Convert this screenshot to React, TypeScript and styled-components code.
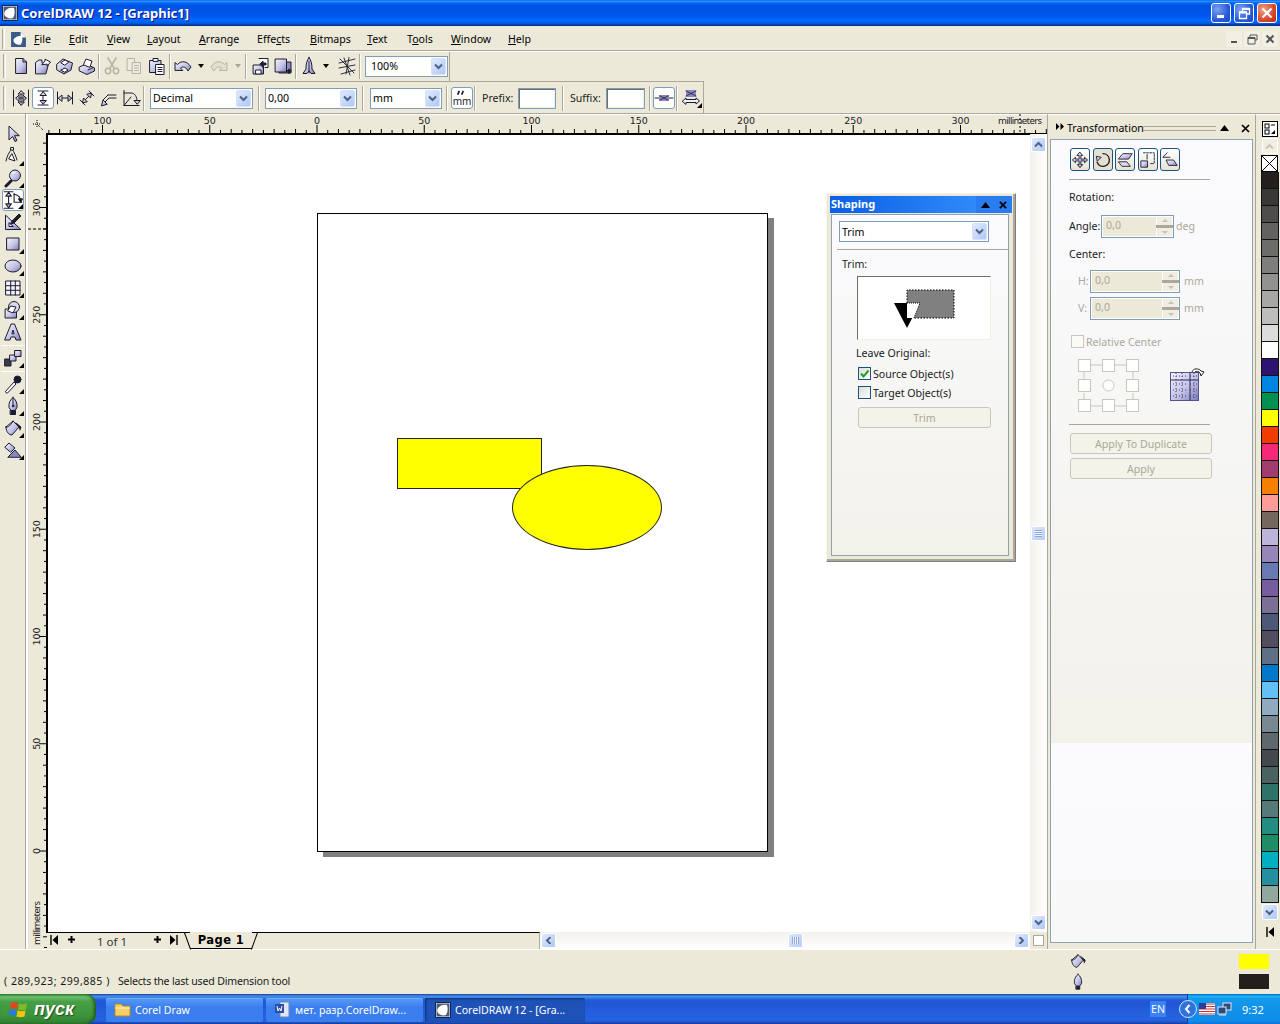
import React from 'react';
import styled, { createGlobalStyle } from 'styled-components';

const UI = '"Noto Sans", "DejaVu Sans", sans-serif';
const BEIGE = '#ece9d8';
const FS = '10.6px';

const Global = createGlobalStyle`
  html, body { margin: 0; padding: 0; width: 1280px; height: 1024px; overflow: hidden; background: ${BEIGE}; }
  body { font-family: ${UI}; font-size: ${FS}; color: #000; }
  * { box-sizing: border-box; }
`;

const Root = styled.div`width:1280px;height:1024px;display:flex;flex-direction:column;background:${BEIGE};`;
const Defs = styled.svg`display:block;width:0;height:0;`;

/* ---------- title ---------- */
const TitleBar = styled.header`
  height:26px;display:flex;align-items:center;padding:0 3px 0 2px;flex:none;
  background:linear-gradient(180deg,#0058ee 0%,#3593ff 4%,#288eff 6%,#127dff 8%,#036ffc 10%,#0262ee 14%,#0057e5 20%,#0054e3 24%,#0055eb 56%,#005bf5 66%,#026afe 76%,#0062ef 86%,#0052d6 92%,#0040ab 94%,#003092 100%);
`;
const TitleText = styled.div`
  margin-left:3px;flex:1;color:#fff;font:bold 13px "Noto Sans",sans-serif;text-shadow:1px 1px 0 #0f1089;white-space:nowrap;
`;
const WinBtn = styled.button<{ $close?: boolean }>`
  width:20px;height:20px;margin-left:3px;padding:0;border:1px solid #fff;border-radius:3px;display:flex;align-items:center;justify-content:center;
  background:${p => p.$close ? 'radial-gradient(circle at 30% 30%,#f0a088,#d8492a 60%,#b32c10)' : 'radial-gradient(circle at 30% 30%,#7aa2f5,#2a5cd8 60%,#1c44b8)'};
`;

/* ---------- menu ---------- */
const MenuBar = styled.nav`
  height:25px;flex:none;display:flex;align-items:center;padding:2px 0 0 6px;border-bottom:1px solid #aca899;box-shadow:0 1px 0 #fff;position:relative;
`;
const MenuGrip = styled.span`width:3px;height:20px;border-left:1px solid #aca899;border-right:1px solid #fff;margin-left:-4px;margin-right:5px;`;
const DocIcon = styled.svg`display:block;width:17px;height:17px;flex:none;margin-right:7px;`;
const MenuItem = styled.span<{ $w: number }>`width:${p => p.$w}px;flex:none;font-size:${FS};`;
const MdiGroup = styled.div`margin-left:auto;display:flex;gap:2px;padding-right:2px;`;
const MdiBtn = styled.span`width:16px;height:16px;background:#f2f0e4;display:flex;align-items:center;justify-content:center;`;

/* ---------- toolbars ---------- */
const ToolRow1 = styled.div`height:30px;flex:none;display:flex;align-items:center;padding-left:3px;width:450px;border-right:1px solid #aca899;`;
const Tool2Wrap = styled.div`height:33px;flex:none;border-bottom:1px solid #aca899;box-shadow:0 1px 0 #fff;`;
const ToolRow2 = styled.div`height:32px;width:704px;display:flex;align-items:center;padding:1px 0 0 3px;border-top:1px solid #aca899;border-right:1px solid #aca899;`;
const Grip = styled.span`width:3px;height:24px;border-left:1px solid #aca899;border-right:1px solid #fff;margin-right:4px;flex:none;`;
const Sep = styled.span<{ $l?: number; $r?: number }>`
  width:2px;height:25px;flex:none;border-left:1px solid #aca899;border-right:1px solid #fff;margin:0 ${p => p.$r ?? 1}px 0 ${p => p.$l ?? 1}px;
`;
const TB = styled.span<{ $on?: boolean; $ml?: number }>`
  position:relative;width:22px;height:22px;flex:none;display:flex;align-items:center;justify-content:center;margin-left:${p => p.$ml ?? 0}px;
  ${p => p.$on ? 'background:#fff;border:1px solid #7f9db9;border-radius:3px;' : ''}
`;
const DropTri = styled.span<{ $off?: boolean; $ml?: number }>`
  width:0;height:0;flex:none;margin:0 2px 0 ${p => p.$ml ?? 3}px;border:3px solid transparent;border-top:4px solid ${p => p.$off ? '#aca899' : '#000'};border-bottom:0;
`;
const Combo = styled.div<{ $w: number; $ml?: number; $pl?: number }>`
  width:${p => p.$w}px;height:21px;flex:none;margin-left:${p => p.$ml ?? 0}px;background:#fff;border:1px solid #7f9db9;display:flex;align-items:center;justify-content:space-between;padding:0 1px 0 ${p => p.$pl ?? 2}px;font-size:${FS};
`;
const ArrowBtn = styled.span`
  width:15px;height:17px;flex:none;background:linear-gradient(135deg,#e1eafe,#aec8f7);border:1px solid #d5e1fb;border-radius:2px;display:flex;align-items:center;justify-content:center;
`;
const Label = styled.span<{ $ml?: number; $w: number }>`font-size:${FS};margin-left:${p => p.$ml ?? 0}px;width:${p => p.$w}px;flex:none;color:#1c1c1c;`;
const TextBox = styled.span<{ $w: number; $ml?: number }>`
  width:${p => p.$w}px;height:21px;flex:none;margin-left:${p => p.$ml ?? 0}px;background:#fff;border:1px solid #7f9db9;box-shadow:inset 1px 1px 0 #716f64,inset -1px -1px 0 #f1efe2;
`;

/* ---------- main ---------- */
const Main = styled.main`flex:1;min-height:0;display:flex;`;
const Toolbox = styled.aside`
  width:28px;flex:none;display:flex;flex-direction:column;align-items:center;padding:9px 0 0 0;border-right:2px solid #fff;box-shadow:inset -1px 0 0 #aca899;
`;
const ToolboxRule = styled.span`width:24px;height:2px;border-bottom:1px solid #fff;margin:1px 0;flex:none;`;
const Center = styled.section`width:1019px;flex:none;display:grid;grid-template-columns:19px 983px 17px;grid-template-rows:19px 799px 17px;`;
const Corner = styled.div`display:flex;align-items:center;justify-content:center;padding:3px 0 0 1px;`;
const RulerH = styled.svg`display:block;grid-column:2 / 4;width:1000px;height:19px;`;
const RulerV = styled.svg`display:block;width:19px;height:816px;grid-row:2 / 4;`;
const Drawing = styled.div`position:relative;background:#fff;border-top:2px solid #000;border-left:2px solid #000;margin-left:-1px;overflow:hidden;`;
const PageSheet = styled.div`position:absolute;left:269px;top:78px;width:451px;height:639px;background:#fff;border:1px solid #000;box-shadow:6px 5px 0 #808080;`;
const ShapeRect = styled.div`position:absolute;left:79px;top:224px;width:145px;height:51px;background:#ff0;border:1px solid #222;`;
const ShapeEllipse = styled.div`position:absolute;left:194px;top:251px;width:150px;height:85px;background:#ff0;border:1px solid #222;border-radius:50%;`;

const VScroll = styled.div`display:flex;flex-direction:column;justify-content:space-between;align-items:center;padding:3px 0 2px;background:linear-gradient(90deg,#f3f1ec,#fff);border-top:1px solid #000;`;
const ScrollBtn = styled.span`
  width:15px;height:15px;flex:none;background:linear-gradient(135deg,#e1eafe,#aec8f7);border:1px solid #fff;border-radius:2px;display:flex;align-items:center;justify-content:center;
`;
const Thumb = styled.span<{ $v?: boolean; $ml?: number }>`
  width:15px;height:15px;flex:none;margin-left:${p => p.$ml ?? 0}px;background:linear-gradient(135deg,#dbe6fd,#b8cff8);border:1px solid #fff;border-radius:2px;display:flex;align-items:center;justify-content:center;
  &::after{content:'';width:7px;height:7px;background:repeating-linear-gradient(${p => p.$v ? '180deg' : '90deg'},#8fa8d8 0 1px,#eef3ff 1px 2px);}
`;
const HBar = styled.div`display:flex;min-width:0;grid-column:2;margin-left:-1px;`;
const Tabs = styled.div`width:494px;flex:none;display:flex;align-items:center;border-top:1px solid #000;padding:0 0 3px 4px;border-right:1px solid #aca899;`;
const NavIcon = styled.span<{ $ml: number }>`margin-left:${p => p.$ml}px;flex:none;display:flex;`;
const PageCount = styled.span`font-size:11.5px;color:#333;margin-left:21px;width:56px;flex:none;padding-top:3px;`;
const PageTab = styled.span`
  position:relative;margin-left:12px;width:62px;height:17px;margin-top:-1px;align-self:flex-start;background:${BEIGE};display:flex;align-items:center;justify-content:center;
  border-bottom:1px solid #000;font:bold 11.5px "DejaVu Sans",sans-serif;letter-spacing:.4px;flex:none;
  &::before,&::after{content:'';position:absolute;top:0;width:1px;height:18px;background:#000;}
  &::before{left:-3px;transform:rotate(-20deg);}
  &::after{right:-3px;transform:rotate(20deg);}
`;
const HTrack = styled.div`flex:1;min-width:0;display:flex;justify-content:space-between;align-items:center;padding:0 1px;background:linear-gradient(180deg,#f3f1ec,#fff);`;
const ScrollCorner = styled.div`display:flex;align-items:center;justify-content:center;`;
const CornerBox = styled.span`width:11px;height:11px;background:#fff;border:1px solid #aca899;`;

/* ---------- shaping window ---------- */
const Floating = styled.div`position:absolute;left:778px;top:58px;width:190px;height:369px;background:${BEIGE};border:1px solid;border-color:#f7f5ea #808080 #808080 #f7f5ea;padding:2px 3px 5px;box-shadow:inset -2px -2px 0 #aca899;display:flex;flex-direction:column;`;
const FloatTitle = styled.div`
  height:17px;flex:none;display:flex;align-items:center;padding:0 0 0 1px;color:#fff;font:bold 11px "Noto Sans",sans-serif;
  background:linear-gradient(90deg,#0a5fe4,#3a94ff);
`;
const FloatTitleText = styled.span`flex:1;padding-bottom:2px;`;
const FloatBtn = styled.span`width:18px;height:17px;background:#2a7df0;display:flex;align-items:center;justify-content:center;`;
const FloatBody = styled.div`flex:1;margin-top:1px;margin-right:3px;margin-left:1px;border:1px solid #8ea4b4;background:linear-gradient(180deg,#fbfbff,#f2f1ea);padding:6px 0 0 7px;display:flex;flex-direction:column;`;
const Rule = styled.div<{ $w: number; $mt?: number; $ml?: number }>`width:${p => p.$w}px;height:1px;background:#aca899;flex:none;margin-top:${p => p.$mt ?? 0}px;margin-left:${p => p.$ml ?? 0}px;`;
const Txt = styled.div<{ $mt?: number; $ml?: number; $off?: boolean; $w?: number }>`font-size:${FS};line-height:13px;margin-top:${p => p.$mt ?? 0}px;margin-left:${p => p.$ml ?? 0}px;color:${p => p.$off ? '#aca899' : '#1a1a1a'};white-space:nowrap;${p => p.$w ? `width:${p.$w}px;flex:none;` : ''}`;
const Preview = styled.div`width:134px;height:64px;margin:5px 0 0 18px;background:#fff;border:1px solid;border-color:#716f64 #f1efe2 #f1efe2 #716f64;flex:none;`;
const PreviewArt = styled.svg`display:block;width:132px;height:62px;`;
const CheckRow = styled.div<{ $mt?: number; $ml: number; $off?: boolean }>`display:flex;align-items:center;gap:2px;margin-top:${p => p.$mt ?? 0}px;margin-left:${p => p.$ml}px;height:13px;font-size:${FS};color:${p => p.$off ? '#aca899' : '#1a1a1a'};white-space:nowrap;`;
const Check = styled.span<{ $off?: boolean }>`width:13px;height:13px;flex:none;border:1px solid ${p => p.$off ? '#c9c7ba' : '#1c5180'};background:${p => p.$off ? '#fbfbf6' : 'linear-gradient(135deg,#dcdcd7,#fff)'};display:flex;align-items:center;justify-content:center;`;
const OffBtn = styled.div<{ $w: number; $h?: number; $mt: number; $ml: number }>`
  width:${p => p.$w}px;height:${p => p.$h ?? 21}px;flex:none;margin-top:${p => p.$mt}px;margin-left:${p => p.$ml}px;background:#f4f3ea;border:1px solid #c9c7ba;border-radius:3px;color:#a9a797;font-size:${FS};display:flex;align-items:center;justify-content:center;
`;

/* ---------- docker ---------- */
const Docker = styled.aside`width:209px;flex:none;display:flex;flex-direction:column;border-top:1px solid #fff;border-left:1px solid #aca899;padding:0 2px 6px 2px;border-right:1px solid #aca899;`;
const DockHead = styled.div`height:24px;flex:none;display:flex;align-items:center;padding:2px 0 0 6px;`;
const DockArrows = styled.svg`display:block;width:8px;height:7px;flex:none;margin-top:-4px;`;
const DockTitle = styled.span`font-size:${FS};margin-left:3px;width:76px;flex:none;`;
const DockLines = styled.span`width:73px;height:5px;flex:none;border-top:1px solid #aca899;border-bottom:1px solid #aca899;`;
const DockHeadBtn = styled.span<{ $ml: number }>`margin-left:${p => p.$ml}px;display:flex;flex:none;`;
const DockBody = styled.div`
  flex:1;min-height:0;border:1px solid #8ea4b4;padding:8px 0 0 19px;display:flex;flex-direction:column;
  background:linear-gradient(180deg,#fbfbff,#f2f1ea) 0 0/100% 603px repeat-y;
`;
const ModeRow = styled.div`display:flex;gap:2.5px;flex:none;`;
const ModeBtn = styled.span<{ $on?: boolean }>`
  width:20px;height:23px;border:1px solid #1c5180;border-radius:3px;display:flex;align-items:center;justify-content:center;
  background:${p => p.$on ? '#e4e1cf' : 'linear-gradient(180deg,#fff,#e6e3d3)'};
`;
const SpinRow = styled.div<{ $mt: number; $ml?: number }>`display:flex;align-items:center;margin-top:${p => p.$mt}px;margin-left:${p => p.$ml ?? 0}px;flex:none;`;
const Spin = styled.div<{ $w: number }>`
  position:relative;width:${p => p.$w}px;height:23px;flex:none;border:1px solid #7f9db9;background:#fff;padding:1px;display:flex;
  &::after{content:'';position:absolute;right:0;top:9px;width:17px;height:3px;background:#aca899;}
`;
const SpinField = styled.span`flex:1;background:${BEIGE};color:#aca899;font-size:${FS};padding:0 0 4px 3px;display:flex;align-items:center;`;
const SpinArrows = styled.span`width:15px;margin-left:1px;flex:none;background:#f0eee2;display:flex;flex-direction:column;justify-content:space-between;align-items:center;padding:2px 0;`;
const TinyUp = styled.span<{ $down?: boolean }>`width:0;height:0;border:3px solid transparent;${p => p.$down ? 'border-top:3px solid #c4c2b3;border-bottom:0;' : 'border-bottom:3px solid #c4c2b3;border-top:0;'}`;
const AnchorRow = styled.div`display:flex;align-items:flex-start;margin:11px 0 0 8px;flex:none;`;
const Grid9 = styled.svg`display:block;width:62px;height:54px;flex:none;`;
const TableIcon = styled.svg`display:block;width:36px;height:36px;margin:8px 0 0 30px;flex:none;`;

/* ---------- palette ---------- */
const Palette = styled.aside`width:24px;flex:none;display:flex;flex-direction:column;align-items:center;padding:7px 0 0 3px;`;
const PalIcon = styled.span`width:16px;height:16px;flex:none;display:flex;`;
const PalBtn = styled.span<{ $off?: boolean }>`
  width:16px;height:16px;flex:none;margin-top:1px;display:flex;align-items:center;justify-content:center;background:${p => p.$off ? '#f1efe4' : 'linear-gradient(135deg,#e1eafe,#aec8f7)'};border:1px solid #fff;border-radius:2px;
`;
const NoFill = styled.span`width:17px;height:17px;flex:none;margin-top:1px;background:#fff;border:1px solid #000;display:flex;`;
const Swatches = styled.div`display:flex;flex-direction:column;width:18px;flex:none;border:solid #111;border-width:0 1px;`;
const Swatch = styled.span<{ $c: string }>`display:block;height:17px;background:${p => p.$c};border-bottom:1px solid #111;`;
const PalEnd = styled.span`margin-top:7px;flex:none;display:flex;`;

/* ---------- status ---------- */
const Status = styled.footer`height:45px;flex:none;display:flex;border-top:1px solid #fff;padding:0 11px 0 4px;`;
const StatusLeft = styled.div`flex:1;display:flex;align-items:flex-end;padding-bottom:6px;font-size:${FS};color:#1a1a1a;`;
const Coord = styled.span`width:114px;flex:none;letter-spacing:.5px;`;
const Hint = styled.span`letter-spacing:-.2px;`;
const StatusIcons = styled.div`width:170px;flex:none;display:flex;flex-direction:column;gap:3px;padding-top:2px;`;
const StatusSw = styled.div`width:30px;flex:none;display:flex;flex-direction:column;gap:5px;padding-top:4px;`;
const Chip = styled.span<{ $c: string }>`height:15px;background:${p => p.$c};display:block;`;

/* ---------- taskbar ---------- */
const Taskbar = styled.footer`
  height:30px;flex:none;display:flex;align-items:stretch;color:#fff;
  background:linear-gradient(180deg,#1f2f86 0,#3165c4 3%,#3682e5 6%,#4490e6 10%,#3883e5 12%,#2b71e0 15%,#2663da 18%,#235bd6 20%,#2258d5 23%,#2157d6 38%,#245ddb 54%,#2562df 86%,#245fdc 89%,#2158d4 92%,#1d4ec0 95%,#1941a5 98%);
`;
const Start = styled.div`
  width:96px;flex:none;display:flex;align-items:center;padding-left:9px;gap:5px;border-radius:0 10px 10px 0;
  background:linear-gradient(180deg,#388e38 0,#6cc06c 10%,#47a047 25%,#3c943c 70%,#2f7f2f 100%);box-shadow:inset -2px 0 3px #1d5c1d;
  font:italic bold 18px "Liberation Sans",sans-serif;text-shadow:1px 1px 1px #1c4c1c;
`;
const TaskBtn = styled.div<{ $on?: boolean; $w: number; $ml: number; $pl?: number }>`
  width:${p => p.$w}px;flex:none;margin:4px 0 2px ${p => p.$ml}px;display:flex;align-items:center;padding:0 0 1px ${p => p.$pl ?? 8}px;gap:4px;border-radius:2px;font-size:${FS};white-space:nowrap;overflow:hidden;
  background:${p => p.$on ? '#1e52b7' : 'linear-gradient(180deg,#5a9cf8,#3a7ef0 40%,#3a7ef0)'};
  ${p => p.$on ? 'box-shadow:inset 1px 1px 2px #12306e;' : 'box-shadow:inset 0 1px 0 #6fa9fa;'}
`;
const EnBox = styled.span`margin:auto 0 auto auto;font-size:${FS};background:#3c81f3;width:16px;height:16px;display:flex;align-items:center;justify-content:center;flex:none;`;
const Tray = styled.div`
  width:93px;margin-left:21px;flex:none;display:flex;align-items:center;border-left:1px solid #0f3f9a;
  background:linear-gradient(180deg,#0c59b9 0,#139ee9 5%,#18b5f2 10%,#139beb 15%,#1290e8 50%,#0d8dea 90%,#0f6fd3 100%);font-size:11px;
`;
const TrayChev = styled.span`margin-left:-9px;flex:none;display:flex;`;
const FlagIc = styled.svg`display:block;width:16px;height:12px;margin-left:2px;flex:none;`;
const NetIc = styled.svg`display:block;width:15px;height:15px;margin-left:2px;flex:none;`;
const TrayClock = styled.span`margin-left:10px;flex:none;`;

/* ---------- drawings ---------- */
const D = '#1c1c30';
const F = 'url(#lav)';
const Off = '#b5b3a4';
const IcSvg = styled.svg`display:block;flex:none;`;
const Ic: React.FC<{ children: React.ReactNode; s?: number }> = ({ children, s = 20 }) => (
  <IcSvg width={s} height={s} viewBox="0 0 20 20" fill="none" stroke={D} strokeWidth={1} strokeLinejoin="round" strokeLinecap="round">{children}</IcSvg>
);
const Chevron: React.FC<{ dir?: 'd' | 'u' | 'l' | 'r'; c?: string }> = ({ dir = 'd', c = '#4d6185' }) => {
  const r = { d: 0, u: 180, l: 90, r: 270 }[dir];
  return <svg width="9" height="7" viewBox="0 0 9 7"><path d="M1 1.5 4.5 5 8 1.5" fill="none" stroke={c} strokeWidth="2" transform={`rotate(${r} 4.5 3.5)`} /></svg>;
};
const Flyout = styled.span`position:absolute;right:0;bottom:1px;width:0;height:0;border-left:5px solid transparent;border-bottom:5px solid #000;`;
const CdrIcon: React.FC<{ s: number }> = ({ s }) => (
  <svg width={s} height={s} viewBox="0 0 16 16"><rect x=".5" y=".5" width="15" height="15" fill="#fff" stroke="#10264e" /><rect x="1.5" y="1.5" width="13" height="13" fill="#4a5a78" /><path d="M3 6c2-3 6-4 9-3 1 3 1 7-1 10-3 1-6 0-8-2-1-2-1-3 0-5z" fill="#fff" /></svg>
);
const Bucket = <><path d="M3 9 10 3l6 6-7 8c-3 0-6-3-6-8z" fill={F} /><path d="M3 9c2 1 5-2 7-6" /><path d="M13 5l5 4-1 3" fill={D} /></>;

const icons = {
  newDoc: <Ic><path d="M5 2.5h7l3.5 3.5v11.5H5z" fill={F} /><path d="M12 2.5V6h3.5" /></Ic>,
  open: <Ic><path d="M2.5 17.5V6.5L6 4h3v3h6v3l-2 7.5z" fill={F} /><path d="M9 8.5 12 5V3.2L17.5 6l-3.3 4.2V8.5z" fill="#fff" /></Ic>,
  save: <Ic><path d="M2 8 8 3l9.5 4-1.5 7-7 4-7-4z" fill={F} /><path d="M6 6.5 10 4l4 2-4 3z" fill="#fff" /><path d="M6 14l4-2 3 2-3 2z" fill="#fff" /></Ic>,
  print: <Ic><path d="M2.5 11 9 8l8.5 4v3L10 18.5 2.5 15z" fill={F} /><path d="M6.5 8.5 9 3l6 2-2 6z" fill="#fff" /><path d="M11 14l5-2.4" /></Ic>,
  cut: <Ic><g stroke={Off} strokeWidth={1.5}><path d="M6 2l6 10M14 2 8 12" /><circle cx="6" cy="15" r="2.7" /><circle cx="14" cy="15" r="2.7" /></g></Ic>,
  copy: <Ic><g stroke={Off} fill="#eeecdf"><path d="M3.5 2.5h7v12h-7z" /><path d="M8.5 6.5h8v11h-8z" /><path d="M10.5 9.5h4M10.5 12h4M10.5 14.5h4" /></g></Ic>,
  paste: <Ic><path d="M3 4.5h11v12H3z" fill={F} /><path d="M6 5V2.5h5V5z" fill="#fff" /><path d="M9 8.5h8v10H9z" fill="#fff" /><path d="M11 11.5h4M11 13.5h4M11 15.5h4" /></Ic>,
  undo: <Ic><path d="M2 14V6.5l2.5 2C8 4.5 14 4.5 18 11l-3 4c-2-4-5-5-7.5-3l2 2.2z" fill={F} /></Ic>,
  redo: <Ic><g stroke={Off} fill="#e2e0d2"><path d="M18 14V6.5l-2.5 2C12 4.5 6 4.5 2 11l3 4c2-4 5-5 7.5-3l-2 2.2z" /></g></Ic>,
  imp: <Ic><path d="M2.5 9h10v9h-10z" fill={F} /><path d="M5 14h5v4H5z" fill="#fff" /><path d="M8 2.5h9v9h-3" fill="#fff" /><path d="M9 8l3-3v2h3v2h-3v2z" fill={D} /></Ic>,
  exp: <Ic><path d="M13.5 6 18 6v11H6v-1" fill="#8f8dc0" /><path d="M2.5 3h11v13h-11z" fill={F} /><path d="M16 13l-2 2h1v2h2v-2h1z" fill={D} /></Ic>,
  rocket: <Ic><path d="M10 1.5C7.5 4.5 7 9 7 13l-3 4.500h4L10 15l2 2.500h4L13 13c0-4-.5-8.500-3-11.500z" fill={F} /><path d="M10 5v12" /></Ic>,
  web: <Ic><path d="M2 7 18 3M2 12l16-3M7 2l6 17M12 1.500 9 18M3 3l14 14M18 14 4 18" strokeWidth={.9} /></Ic>,
  dimAuto: <Ic><path d="M2.500 2v16M17.500 2v16M5 10h10" /><path d="M5 10l3-3v6zM15 10l-3-3v6z" fill={F} /><path d="M10 3v14" /><path d="M10 3 7 6h6zM10 17l-3-3h6z" fill={F} /></Ic>,
  dimV: <Ic><path d="M5 3h10M5 17h10M10 4v12" /><path d="M10 4 7 7.500h6zM10 16l-3-3.500h6z" fill={F} /></Ic>,
  dimH: <Ic><path d="M2.500 4v12M17.500 4v12M4 10h12" /><path d="M3.500 10 7 7v6zM16.500 10 13 7v6z" fill={F} /></Ic>,
  dimS: <Ic><path d="M3 12l5 5M12 3l5 5M7 13l6-6" /><path d="M5.500 14.500l1-4.500 3.500 3.500zM14.500 5.500l-1 4.500L10 6.500z" fill={F} /></Ic>,
  callout: <Ic><path d="M3 17l7-7h7" /><path d="M2.500 17.500 4 12l4 4z" fill={F} /><path d="M9 7l-5 5" /><path d="M17 7H9" /></Ic>,
  angular: <Ic><path d="M3 2.500v15h15" /><path d="M3 5h7c4 0 6 4 6 8" /><path d="M16 16l-3-3.500h6z" fill={F} /><path d="M3 17.500 10 9" /></Ic>,
  mmUnit: <Ic><path d="M7 3.500 6 6M11 3.500 10 6" strokeWidth={1.800} /><text x="10" y="17" fontSize="10" fill="#1c1c30" stroke="none" textAnchor="middle" fontFamily="Noto Sans">mm</text></Ic>,
  xxLine: <Ic><path d="M1 10h18" /><rect x="5" y="7" width="10" height="6" fill="#8b88c4" stroke="none" /><path d="M6 8l8 4M14 8l-8 4" strokeWidth={.8} /></Ic>,
  xxArrow: <Ic><rect x="5" y="2" width="10" height="7" fill="#8b88c4" stroke="none" /><path d="M5 3l10 5M15 3 5 8" strokeWidth={.8} /><path d="M1.500 13 5 10v1.500h10V10l3.500 3L15 16v-1.500H5V16z" fill="#eeeeff" /></Ic>,
  pick: <Ic><path d="M6 2.500V16l3.500-3.500 2.500 5 2-1-2.500-4.800h4.500z" fill={F} /></Ic>,
  shape: <Ic><path d="M3 15c1-5 3-9 6-12 2 3 4 7 5 11" /><rect x="8" y="1.500" width="2.500" height="2.500" fill="#fff" /><path d="M9 8l3 7-6-2z" fill="#fff" /></Ic>,
  zoom: <Ic><path d="M3 18l5-5" strokeWidth={3} /><circle cx="12" cy="7.500" r="5.500" fill={F} /><path d="M9 6c1-1 2-1.500 3-1.500" stroke="#fff" /></Ic>,
  dimTool: <Ic s={22}><path d="M2 2.500h8M2 17.500h8M6 3v14" /><path d="M6 3 3.500 6.500h5zM6 17l-2.500-3.500h5z" fill={F} /><path d="M11 4v8h7" /><path d="M11 5c4 0 6 3 6 6" /><path d="M17 12l-2-3h3.500z" fill={D} /></Ic>,
  draft: <Ic><path d="M2.500 3.500v14h15z" fill={F} /><path d="M6 11v3.500h4z" fill="#fff" /><path d="M9 9l7-7 2 2-7 7-3 1z" fill={D} /></Ic>,
  rect: <Ic><path d="M4 4h12v12H4z" fill={F} /></Ic>,
  ellipse: <Ic><ellipse cx="10" cy="10" rx="8" ry="6" fill={F} /></Ic>,
  grid: <Ic><path d="M3 3h14v14H3zM3 7.700h14M3 12.300h14M7.700 3v14M12.300 3v14" fill="#f4f4ff" /></Ic>,
  basic: <Ic><path d="M2.500 9h11v9h-11z" fill={F} /><circle cx="11" cy="7" r="5.500" fill="#dadaf2" /><path d="M8 6l5 1-3 6-5-2z" fill="#fff" /></Ic>,
  textA: <Ic><path d="M8.500 2h3L18 18h-5l-1-3H8l-1 3H2z" fill={F} /><path d="M9 11.500 10 8l1 3.500z" fill="#fff" /></Ic>,
  blend: <Ic><path d="M2 11h6v7H2z" fill="#3a3a50" /><path d="M7 7h6v6H7z" fill={F} /><path d="M12 2.500h6v6h-6z" fill={F} /></Ic>,
  dropper: <Ic><path d="M2.500 17.500 11 8l2 2-8.500 9z" fill="#fff" /><circle cx="14.500" cy="5.500" r="3.500" fill={D} /></Ic>,
  pen: <Ic><path d="M10 1.500c-3 2-4.500 6-4 10l2 3h4l2-3c.5-4-1-8-4-10z" fill={F} /><path d="M10 2v7" /><circle cx="10" cy="10" r=".8" fill={D} /><path d="M7.500 14.500h5v4h-5z" fill={D} /></Ic>,
  fill: <Ic>{Bucket}</Ic>,
  ifill: <Ic><path d="M2 7l4-4 6 5-4 4z" fill={F} /><path d="M5 17 12 10l6 7z" fill="#8a88c6" /></Ic>,
};

const TriUp = () => <svg width="9" height="6" viewBox="0 0 9 6"><path d="M4.500 0 9 6H0z" /></svg>;
const CrossX = () => <svg width="9" height="9" viewBox="0 0 9 9"><path d="M1 1 8 8M8 1 1 8" stroke="#000" strokeWidth="1.700" /></svg>;
const FirstIc = () => <svg width="8" height="10" viewBox="0 0 8 10"><path d="M1 0v10" stroke="#000" strokeWidth="1.400" /><path d="M8 0v10L2.500 5z" /></svg>;
const LastIc = () => <svg width="8" height="10" viewBox="0 0 8 10"><path d="M7 0v10" stroke="#000" strokeWidth="1.400" /><path d="M0 0v10l5.500-5z" /></svg>;
const PlusIc = () => <svg width="9" height="9" viewBox="0 0 9 9"><path d="M4.500 1v7M1 4.500h7" stroke="#000" strokeWidth="2" /></svg>;

/* ---------- ruler data ---------- */
const MM = 2.145;
const hTicks: number[] = []; for (let n = -30; n <= 70; n++) hTicks.push(n * 5);
const vTicks: number[] = []; for (let n = -15; n <= 70; n++) vTicks.push(n * 5);
const hX = (mm: number) => 317 + mm * MM - 47;
const vY = (mm: number) => 851 - mm * MM - 133;

const menu: [React.ReactNode, number][] = [
  [<><u>F</u>ile</>, 35], [<><u>E</u>dit</>, 38], [<><u>V</u>iew</>, 40], [<><u>L</u>ayout</>, 52], [<><u>A</u>rrange</>, 58], [<>Effe<u>c</u>ts</>, 53],
  [<><u>B</u>itmaps</>, 57], [<><u>T</u>ext</>, 40], [<>T<u>o</u>ols</>, 44], [<><u>W</u>indow</>, 57], [<><u>H</u>elp</>, 40],
];
const colors = ['#231f1c', '#3a3836', '#4f4d4b', '#636261', '#6c6c6b', '#7e7e7d', '#929291', '#a7a7a6', '#bdbdbc', '#dcdcdc', '#ffffff', '#2e1270', '#0085e0', '#009050', '#ffff00', '#f03c00', '#f52a77', '#a03c6e', '#f58000', '#ff9c96', '#74675e', '#bdb4da', '#9785ba', '#6979b3', '#775d9f', '#7a7095', '#4c5878', '#524d60', '#5f7084', '#0079cc', '#62c0f5', '#90aabf', '#788892', '#5f696d', '#44494d', '#486360', '#2f7268', '#56797a', '#228d80', '#1d8d65', '#00b0c2', '#2390a0', '#90a99c'];

const SpinBox: React.FC<{ w: number }> = ({ w }) => (
  <Spin $w={w}><SpinField>0,0</SpinField><SpinArrows><TinyUp /><TinyUp $down /></SpinArrows></Spin>
);

export default function App() {
  return (
    <Root>
      <Global />
      <Defs aria-hidden="true">
        <defs>
          <linearGradient id="lav" x1="0" y1="0" x2="1" y2="1">
            <stop offset="0" stopColor="#f4f4fd" /><stop offset=".55" stopColor="#c4c4e6" /><stop offset="1" stopColor="#7c7ab8" />
          </linearGradient>
        </defs>
      </Defs>

      <TitleBar>
        <CdrIcon s={16} />
        <TitleText>CorelDRAW 12 - [Graphic1]</TitleText>
        <WinBtn><svg width="12" height="12" viewBox="0 0 12 12"><rect x="2" y="8" width="7" height="3" fill="#fff" /></svg></WinBtn>
        <WinBtn><svg width="13" height="13" viewBox="0 0 13 13" fill="none" stroke="#fff"><path d="M4.500 4V1.500h7V7H9" strokeWidth="1.300" /><path d="M1.500 5h7v6.500h-7z" strokeWidth="1.300" /><path d="M1.500 5.500h7M4.500 2h7" strokeWidth="2" /></svg></WinBtn>
        <WinBtn $close><svg width="12" height="12" viewBox="0 0 12 12"><path d="M1.500 1.500l9 9M10.500 1.500l-9 9" stroke="#fff" strokeWidth="2.200" /></svg></WinBtn>
      </TitleBar>

      <MenuBar>
        <MenuGrip />
        <DocIcon viewBox="0 0 16 16"><path d="M1 1h9l5 5v9H1z" fill="#3a5a88" /><path d="M4 7c2-2 4-3 7-2 1 2 1 5-1 8-3 0-5-1-6-2-1-2-1-3 0-4z" fill="#fff" /><path d="M10 1v5h5z" fill="#fff" /></DocIcon>
        {menu.map(([t, w], i) => <MenuItem key={i} $w={w}>{t}</MenuItem>)}
        <MdiGroup>
          <MdiBtn><svg width="10" height="10" viewBox="0 0 10 10"><rect x="2" y="7" width="6" height="2" fill="#555" /></svg></MdiBtn>
          <MdiBtn><svg width="11" height="11" viewBox="0 0 11 11" fill="none" stroke="#555"><path d="M3 3V1h7v5H8" /><path d="M1 3.500h7V10H1z" /><path d="M1 4h7" strokeWidth="2" /></svg></MdiBtn>
          <MdiBtn><svg width="10" height="10" viewBox="0 0 10 10"><path d="M1.500 1.500l7 7M8.500 1.500l-7 7" stroke="#555" strokeWidth="2" /></svg></MdiBtn>
        </MdiGroup>
      </MenuBar>

      <ToolRow1>
        <Grip />
        <TB>{icons.newDoc}</TB><TB>{icons.open}</TB><TB>{icons.save}</TB><TB>{icons.print}</TB>
        <Sep $l={0} />
        <TB>{icons.cut}</TB><TB>{icons.copy}</TB><TB $ml={1}>{icons.paste}</TB>
        <Sep />
        <TB>{icons.undo}</TB><DropTri $ml={4} />
        <TB $ml={2}>{icons.redo}</TB><DropTri $off $ml={5} />
        <Sep $l={2} />
        <TB $ml={2}>{icons.imp}</TB><TB>{icons.exp}</TB>
        <Sep />
        <TB>{icons.rocket}</TB><DropTri />
        <TB $ml={5}>{icons.web}</TB>
        <Sep />
        <Combo $w={83} $ml={3} $pl={5}>100%<ArrowBtn><Chevron /></ArrowBtn></Combo>
      </ToolRow1>

      <Tool2Wrap>
        <ToolRow2>
          <Grip />
          <TB>{icons.dimAuto}</TB><TB $on>{icons.dimV}</TB><TB>{icons.dimH}</TB><TB>{icons.dimS}</TB><TB>{icons.callout}</TB><TB>{icons.angular}</TB>
          <Sep $l={1} />
          <Combo $w={103} $ml={4}>Decimal<ArrowBtn><Chevron /></ArrowBtn></Combo>
          <Sep $l={5} />
          <Combo $w={92} $ml={4}>0,00<ArrowBtn><Chevron /></ArrowBtn></Combo>
          <Sep $l={5} />
          <Combo $w={72} $ml={5}>mm<ArrowBtn><Chevron /></ArrowBtn></Combo>
          <Sep $l={4} />
          <TB $on $ml={2}>{icons.mmUnit}</TB>
          <Sep $l={1} />
          <Label $ml={5} $w={36}>Prefix:</Label>
          <TextBox $w={38} />
          <Sep $l={6} />
          <Label $ml={5} $w={36}>Suffix:</Label>
          <TextBox $w={39} />
          <Sep $l={4} />
          <TB $on $ml={1}>{icons.xxLine}</TB>
          <Sep $l={1} />
          <TB $ml={1}>{icons.xxArrow}<Flyout /></TB>
        </ToolRow2>
      </Tool2Wrap>

      <Main>
        <Toolbox>
          <TB>{icons.pick}</TB>
          <TB>{icons.shape}<Flyout /></TB>
          <TB>{icons.zoom}<Flyout /></TB>
          <TB $on>{icons.dimTool}<Flyout /></TB>
          <TB>{icons.draft}</TB>
          <TB>{icons.rect}<Flyout /></TB>
          <TB>{icons.ellipse}<Flyout /></TB>
          <TB>{icons.grid}<Flyout /></TB>
          <TB>{icons.basic}<Flyout /></TB>
          <TB>{icons.textA}</TB>
          <ToolboxRule />
          <TB>{icons.blend}<Flyout /></TB>
          <ToolboxRule />
          <TB>{icons.dropper}<Flyout /></TB>
          <TB>{icons.pen}<Flyout /></TB>
          <TB>{icons.fill}<Flyout /></TB>
          <TB>{icons.ifill}<Flyout /></TB>
        </Toolbox>

        <Center>
          <Corner>
            <svg width="12" height="12" viewBox="0 0 12 12" fill="none" stroke="#000"><path d="M5 1v8M1 5h8" strokeDasharray="1 1" /><path d="M6 6l5 5" strokeDasharray="1 1" /></svg>
          </Corner>
          <RulerH viewBox="0 0 1000 19">
            {hTicks.map(mm => {
              const x = hX(mm);
              if (x < 0 || x > 1000) return null;
              const major = mm % 50 === 0;
              return (
                <g key={mm}>
                  <line x1={x} x2={x} y1={major ? 11 : mm % 10 === 0 ? 15 : 16} y2={19} stroke="#000" />
                  {major && x < 940 && <text x={x} y={10} fontSize="9.500" fontFamily="DejaVu Sans" textAnchor="middle" fill="#222">{Math.abs(mm)}</text>}
                </g>
              );
            })}
            <text x={951} y={10} fontSize="9.500" fontFamily="Noto Sans" fill="#222" textLength={44}>millimeters</text>
            <line x1={973} x2={973} y1={0} y2={19} stroke="#000" strokeDasharray="2 2" />
          </RulerH>
          <RulerV viewBox="0 0 19 816">
            {vTicks.map(mm => {
              const y = vY(mm);
              if (y < 0 || y > 816) return null;
              const major = mm % 50 === 0;
              return (
                <g key={mm}>
                  <line x1={major ? 11 : mm % 10 === 0 ? 15 : 16} x2={19} y1={y} y2={y} stroke="#000" />
                  {major && y < 760 && <text transform={`translate(12 ${y}) rotate(-90)`} fontSize="9.500" fontFamily="DejaVu Sans" textAnchor="middle" fill="#222">{mm}</text>}
                </g>
              );
            })}
            <text transform="translate(12 812) rotate(-90)" fontSize="9.500" fontFamily="Noto Sans" fill="#222" textLength={44}>millimeters</text>
            <line x1={0} x2={19} y1={96} y2={96} stroke="#000" strokeDasharray="3 2" />
          </RulerV>

          <Drawing>
            <PageSheet>
              <ShapeRect />
              <ShapeEllipse />
            </PageSheet>
            <Floating>
              <FloatTitle>
                <FloatTitleText>Shaping</FloatTitleText>
                <FloatBtn><TriUp /></FloatBtn>
                <FloatBtn><svg width="8" height="8" viewBox="0 0 9 9"><path d="M1 1 8 8M8 1 1 8" stroke="#000" strokeWidth="2" /></svg></FloatBtn>
              </FloatTitle>
              <FloatBody>
                <Combo $w={150}>Trim<ArrowBtn><Chevron /></ArrowBtn></Combo>
                <Rule $w={171} $mt={7} $ml={-2} />
                <Txt $mt={8} $ml={3}>Trim:</Txt>
                <Preview>
                  <PreviewArt viewBox="0 0 132 62">
                    <rect x="49" y="13" width="47" height="28" fill="#808080" />
                    <path d="M36 26H62L49 51z" fill="#000" />
                    <path d="M49 26H62L56 41H49z" fill="#fff" />
                    <path d="M49 26V13H96V41H56" fill="none" stroke="#000" strokeDasharray="1.500 1.500" />
                    <path d="M49 26H62L56 41" fill="none" stroke="#000" strokeDasharray="1 1" />
                  </PreviewArt>
                </Preview>
                <Txt $mt={7} $ml={17}>Leave Original:</Txt>
                <CheckRow $mt={7} $ml={19}><Check><svg width="11" height="11" viewBox="0 0 11 11"><path d="M2 5.500 4.500 8.500 9.500 2.500" fill="none" stroke="#21a121" strokeWidth="2" /></svg></Check>Source Object(s)</CheckRow>
                <CheckRow $mt={6} $ml={19}><Check />Target Object(s)</CheckRow>
                <OffBtn $w={133} $mt={8} $ml={19}>Trim</OffBtn>
              </FloatBody>
            </Floating>
          </Drawing>
          <VScroll>
            <ScrollBtn><Chevron dir="u" /></ScrollBtn>
            <Thumb $v />
            <ScrollBtn><Chevron /></ScrollBtn>
          </VScroll>
          <HBar>
            <Tabs>
              <NavIcon $ml={0}><FirstIc /></NavIcon>
              <NavIcon $ml={9}><PlusIc /></NavIcon>
              <PageCount>1 of 1</PageCount>
              <NavIcon $ml={0}><PlusIc /></NavIcon>
              <NavIcon $ml={8}><LastIc /></NavIcon>
              <PageTab>Page 1</PageTab>
            </Tabs>
            <HTrack>
              <ScrollBtn><Chevron dir="l" /></ScrollBtn>
              <Thumb $ml={20} />
              <ScrollBtn><Chevron dir="r" /></ScrollBtn>
            </HTrack>
          </HBar>
          <ScrollCorner><CornerBox /></ScrollCorner>
        </Center>

        <Docker>
          <DockHead>
            <DockArrows viewBox="0 0 8 7"><path d="M0 0l3.500 3.500L0 7zM4.500 0 8 3.500 4.500 7z" /></DockArrows>
            <DockTitle>Transformation</DockTitle>
            <DockLines />
            <DockHeadBtn $ml={4}><TriUp /></DockHeadBtn>
            <DockHeadBtn $ml={12}><CrossX /></DockHeadBtn>
          </DockHead>
          <DockBody>
            <ModeRow>
              <ModeBtn><Ic s={18}><path d="M10 1.500 13 5h-2v4h4V7l3.500 3L15 13v-2h-4v4h2l-3 3.500L7 15h2v-4H5v2l-3.500-3L5 7v2h4V5H7z" fill={F} /></Ic></ModeBtn>
              <ModeBtn $on><Ic s={18}><path d="M10 3a7 7 0 1 1-6.500 9.500" fill="none" strokeWidth={1.500} /><path d="M3 6l5 1-4 4z" fill={F} /></Ic></ModeBtn>
              <ModeBtn><Ic s={18}><path d="M8 3h10l-4 6H3z" fill={F} /><path d="M3 12h9l4 5H7z" fill="#dcdcf2" /></Ic></ModeBtn>
              <ModeBtn><Ic s={18}><path d="M5 2h12v12" strokeDasharray="2 1.500" /><path d="M2.500 11h7v7h-7z" fill={F} /><path d="M9 4v5M13 14h3" /></Ic></ModeBtn>
              <ModeBtn><Ic s={18}><path d="M7 2 2 7h8" /><path d="M6 10h8l4 6H9z" fill={F} /></Ic></ModeBtn>
            </ModeRow>
            <Rule $w={141} $mt={8} $ml={-1} />
            <Txt $mt={11} $ml={-1}>Rotation:</Txt>
            <SpinRow $mt={11} $ml={-1}>
              <Txt $w={32}>Angle:</Txt>
              <SpinBox w={73} />
              <Txt $off $ml={2}>deg</Txt>
            </SpinRow>
            <Txt $mt={10} $ml={-1}>Center:</Txt>
            <SpinRow $mt={9} $ml={8}>
              <Txt $off $w={12}>H:</Txt>
              <SpinBox w={90} />
              <Txt $off $ml={4}>mm</Txt>
            </SpinRow>
            <SpinRow $mt={4} $ml={8}>
              <Txt $off $w={12}>V:</Txt>
              <SpinBox w={90} />
              <Txt $off $ml={4}>mm</Txt>
            </SpinRow>
            <CheckRow $mt={15} $ml={1} $off><Check $off />Relative Center</CheckRow>
            <AnchorRow>
              <Grid9 viewBox="0 0 62 54" fill="#fff" stroke="#c9c7ba">
                <path d="M13 6h11M37 6h11M6 13v7M55 13v7M6 34v7M55 34v7M13 47h11M37 47h11" fill="none" />
                {[[0.5, 0.5], [24.5, 0.5], [48.5, 0.5], [0.5, 20.5], [48.5, 20.5], [0.5, 40.5], [24.5, 40.5], [48.5, 40.5]].map(([x, y]) => <rect key={`${x}-${y}`} x={x} y={y} width="12" height="12" />)}
                <circle cx="30.500" cy="26.500" r="5.500" />
              </Grid9>
              <TableIcon viewBox="0 0 36 36">
                <rect x=".5" y="5.500" width="28" height="28" fill="url(#lav)" stroke="#55528f" />
                <path d="M.5 13h28M20 5.500v28" stroke="#2a2858" />
                <path d="M3 9h15M3 17h15M3 23h15M3 29h15M6 6v27M12 6v27M24 6v27M20 9h8M20 17h8M20 23h8M20 29h8" stroke="#3c3a78" strokeDasharray="1 2" />
                <path d="M22 5c1-4 7-4 9-1l3 1-3 4-1-3c-1-2-4-2-5-1" fill="#fff" stroke="#222" />
              </TableIcon>
            </AnchorRow>
            <Rule $w={141} $mt={11} $ml={-1} />
            <OffBtn $w={142} $mt={8} $ml={0}>Apply To Duplicate</OffBtn>
            <OffBtn $w={142} $mt={4} $ml={0}>Apply</OffBtn>
          </DockBody>
        </Docker>

        <Palette>
          <PalIcon><svg width="16" height="16" viewBox="0 0 16 16"><rect x=".5" y=".5" width="15" height="15" fill="#fff" stroke="#000" /><rect x="3" y="3" width="4" height="4" fill="none" stroke="#000" /><rect x="3" y="9" width="4" height="4" fill="none" stroke="#000" /><path d="M9 4h4" stroke="#000" /><path d="M9 13l4-4v4z" /></svg></PalIcon>
          <PalBtn $off><Chevron dir="u" c="#c9c7ba" /></PalBtn>
          <NoFill><svg width="15" height="15" viewBox="0 0 15 15"><path d="M0 0l15 15M15 0 0 15" stroke="#000" /></svg></NoFill>
          <Swatches>{colors.map((c, i) => <Swatch key={i} $c={c} />)}</Swatches>
          <PalBtn><Chevron /></PalBtn>
          <PalEnd><FirstIc /></PalEnd>
        </Palette>
      </Main>

      <Status>
        <StatusLeft>
          <Coord>( 289,923; 299,885 )</Coord>
          <Hint>Selects the last used Dimension tool</Hint>
        </StatusLeft>
        <StatusIcons>
          <Ic s={18}>{Bucket}</Ic>
          <Ic s={18}><path d="M10 1.500c-3 2-4.500 6-4 10l2 3h4l2-3c.5-4-1-8-4-10z" fill={F} /><path d="M8 15h4v3H8z" fill={D} /></Ic>
        </StatusIcons>
        <StatusSw><Chip $c="#ffff00" /><Chip $c="#231f1c" /></StatusSw>
      </Status>

      <Taskbar>
        <Start>
          <svg width="20" height="20" viewBox="0 0 20 20"><path d="M2 4c2-1 4-1 7 0l-1 6c-3-1-5-1-7 0z" fill="#e8431f" /><path d="M10 4.500c2 1 4 1 8 0l-1 6c-3 1-5 1-8 0z" fill="#7fba2b" /><path d="M1 11c2-1 4-1 6.500 0l-1 6c-3-1-5-1-7 0z" fill="#2a7be0" /><path d="M8.500 11.500c3 1 5 1 8 0l-1 6c-3 1-5 1-8 0z" fill="#f7c30d" /></svg>
          <span>пуск</span>
        </Start>
        <TaskBtn $w={157} $ml={10}>
          <svg width="17" height="15" viewBox="0 0 17 15"><path d="M1 2h6l2 2h7v10H1z" fill="#f4cf6a" stroke="#b58a1f" /><path d="M1 6h15" stroke="#fff3b8" /></svg>
          Corel Draw
        </TaskBtn>
        <TaskBtn $w={157} $ml={3}>
          <svg width="17" height="17" viewBox="0 0 17 17"><path d="M6 1h9v15H6z" fill="#dfe6f5" stroke="#6d83b5" /><path d="M1 3h9v9H1z" fill="#2a4fa8" /><path d="M3 5l1 5 1.500-3L7 10l1-5" stroke="#fff" fill="none" /></svg>
          мет. разр.CorelDraw...
        </TaskBtn>
        <TaskBtn $on $w={160} $ml={2} $pl={10}>
          <CdrIcon s={16} />
          CorelDRAW 12 - [Gra...
        </TaskBtn>
        <EnBox>EN</EnBox>
        <Tray>
          <TrayChev><svg width="18" height="18" viewBox="0 0 18 18"><circle cx="9" cy="9" r="8.500" fill="#2f72dc" stroke="#cfe6ff" /><path d="M10.500 5 7 9l3.500 4" fill="none" stroke="#fff" strokeWidth="2" /></svg></TrayChev>
          <FlagIc viewBox="0 0 16 12"><rect width="16" height="12" fill="#fff" /><path d="M0 1h16M0 3.500h16M0 6h16M0 8.500h16M0 11h16" stroke="#d8322a" strokeWidth="1.200" /><rect width="7" height="6" fill="#2a3f9a" /></FlagIc>
          <NetIc viewBox="0 0 15 15"><rect x="6" y="1" width="8" height="7" fill="#2c4c7a" stroke="#dfe6f5" /><rect x="1" y="5" width="8" height="7" fill="#2c4c7a" stroke="#dfe6f5" /><path d="M2 13h7" stroke="#dfe6f5" /></NetIc>
          <TrayClock>9:32</TrayClock>
        </Tray>
      </Taskbar>
    </Root>
  );
}
